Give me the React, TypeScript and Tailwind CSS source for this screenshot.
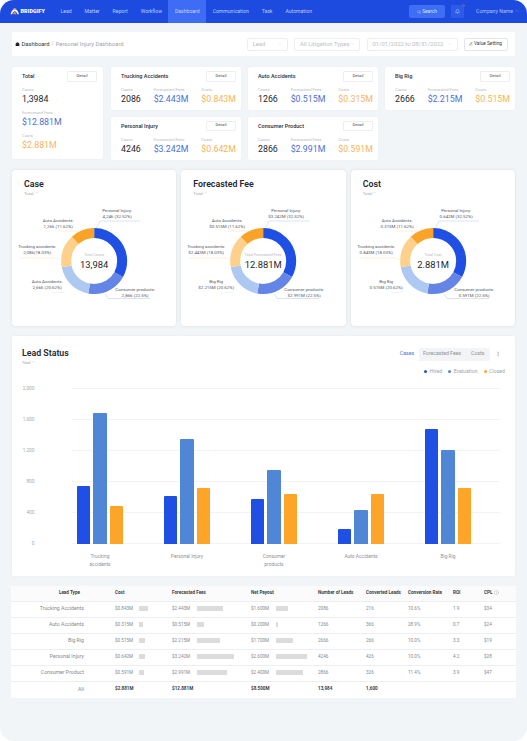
import { Bell, ChevronDown, House, Info, MoreVertical, PencilLine, Search } from "lucide-react";

const NAV = ["Lead", "Matter", "Report", "Workflow", "Dashboard", "Communication", "Task", "Automation"];

const CARDS = [
  { title: "Trucking Accidents", cases: "2086", fees: "$2.443M", costs: "$0.843M" },
  { title: "Auto Accidents", cases: "1266", fees: "$0.515M", costs: "$0.315M" },
  { title: "Big Rig", cases: "2666", fees: "$2.215M", costs: "$0.515M" },
  { title: "Personal Injury", cases: "4246", fees: "$3.242M", costs: "$0.642M" },
  { title: "Consumer Product", cases: "2866", fees: "$2.991M", costs: "$0.591M" },
];

const SEGMENTS = [
  { share: 33, color: "#1f4fe3" },
  { share: 19.8, color: "#6585e6" },
  { share: 19, color: "#adc8f1" },
  { share: 16.2, color: "#fdd08c" },
  { share: 12, color: "#f9a428" },
];

const DONUTS = [
  {
    title: "Case",
    centerLabel: "Total Cases",
    center: "13,984",
    labels: [
      ["Personal Injury:", "4,246 (32.52%)"],
      ["Auto Accidents:", "1,266 (11.62%)"],
      ["Trucking accidents:", "2,086(18.03%)"],
      ["Auto Accidents:", "2,666 (20.62%)"],
      ["Consumer products:", "2,866 (22.5%)"],
    ],
  },
  {
    title: "Forecasted Fee",
    centerLabel: "Total Forecasted Fees",
    center: "12.881M",
    labels: [
      ["Personal Injury:", "$3.242M (32.52%)"],
      ["Auto Accidents:", "$0.515M (11.62%)"],
      ["Trucking accidents:", "$2.443M (18.03%)"],
      ["Big Rig", "$2.215M (20.62%)"],
      ["Consumer products:", "$2.991M (22.5%)"],
    ],
  },
  {
    title: "Cost",
    centerLabel: "Total Cost",
    center: "2.881M",
    labels: [
      ["Personal Injury:", "0.642M (32.52%)"],
      ["Auto Accidents:", "0.315M (11.62%)"],
      ["Trucking accidents:", "0.843M (18.03%)"],
      ["Big Rig", "0.515M (20.62%)"],
      ["Consumer products:", "0.591M (22.5%)"],
    ],
  },
];

const BARS = [
  { name: ["Trucking", "accidents"], hired: 58, evaluation: 131, closed: 38 },
  { name: ["Personal Injury"], hired: 48, evaluation: 105, closed: 56 },
  { name: ["Consumer", "products"], hired: 45, evaluation: 74, closed: 50 },
  { name: ["Auto Accidents"], hired: 15, evaluation: 34, closed: 50 },
  { name: ["Big Rig"], hired: 115, evaluation: 94, closed: 56 },
];

const ROWS = [
  { type: "Trucking Accidents", cost: "$0.843M", costBar: 8.5, fee: "$2.443M", feeBar: 25.7, net: "$1.600M", netBar: 12, leads: "2086", conv: "216", rate: "10.6%", roi: "1.9", cpl: "$34" },
  { type: "Auto Accidents", cost: "$0.315M", costBar: 4.3, fee: "$0.515M", feeBar: 7, net: "$0.200M", netBar: 2, leads: "1266", conv: "366", rate: "28.9%", roi: "0.7", cpl: "$24" },
  { type: "Big Rig", cost: "$0.515M", costBar: 6.3, fee: "$2.215M", feeBar: 23, net: "$1.700M", netBar: 17, leads: "2666", conv: "266", rate: "10.0%", roi: "3.3", cpl: "$19" },
  { type: "Personal Injury", cost: "$0.642M", costBar: 5.5, fee: "$3.242M", feeBar: 37, net: "$2.600M", netBar: 30.5, leads: "4246", conv: "426", rate: "10.0%", roi: "4.2", cpl: "$28" },
  { type: "Consumer Product", cost: "$0.591M", costBar: 5.3, fee: "$2.991M", feeBar: 30, net: "$2.400M", netBar: 27, leads: "2866", conv: "326", rate: "11.4%", roi: "3.9", cpl: "$47" },
];

const COLS = "grid grid-cols-[104px_57px_79px_67px_48px_42px_45px_31px_1fr] items-center";

function DetailButton() {
  return (
    <button className="flex h-[10.5px] w-[30px] items-center justify-center rounded-[1px] border border-[#eceef1] bg-white text-[4.4px] text-[#555]">
      Detail
    </button>
  );
}

function Stat({ label, value, color }: { label: string; value: string; color: string }) {
  return (
    <div>
      <div className="text-[4.2px] leading-[5px] text-[#b9bdc2]">{label}</div>
      <div className={`mt-[2px] text-[8.8px] leading-[11px] ${color}`}>{value}</div>
    </div>
  );
}

function StatCard({ card }: { card: (typeof CARDS)[number] }) {
  return (
    <div className="rounded-[2px] bg-white pl-[10px] pr-[5px] pt-[4px] shadow-[0_0_2px_rgba(30,40,60,0.06)]">
      <div className="flex items-center justify-between">
        <span className="text-[5.5px] font-medium text-[#2b2f36]">{card.title}</span>
        <DetailButton />
      </div>
      <div className="mt-[5.5px] flex justify-between">
        <Stat label="Cases" value={card.cases} color="text-[#23262b]" />
        <Stat label="Forecasted Fees" value={card.fees} color="text-[#4a70d9]" />
        <Stat label="Costs" value={card.costs} color="text-[#f8b55a]" />
      </div>
    </div>
  );
}

function arcs() {
  const circumference = 2 * Math.PI * 28;
  let offset = 0;
  return SEGMENTS.map((s) => {
    const len = (s.share / 100) * circumference;
    const el = (
      <circle
        key={s.color}
        cx="82"
        cy="91"
        r="28"
        fill="none"
        stroke={s.color}
        strokeWidth="10"
        strokeDasharray={`${len} ${circumference - len}`}
        strokeDashoffset={-offset}
        transform="rotate(-90 82 91)"
      />
    );
    offset += len;
    return el;
  });
}

function Donut({ data }: { data: (typeof DONUTS)[number] }) {
  const spots: [number, number, number][] = [
    [105, 40.5, 46.5],
    [46, 50.5, 56.5],
    [25, 76.5, 82.5],
    [35, 111.5, 117.5],
    [123, 119, 125],
  ];
  return (
    <div className="h-[156px] rounded-[4px] bg-white shadow-[0_0_3px_rgba(30,40,60,0.12)]">
      <div className="px-[12px] pt-[8px]">
        <h2 className="text-[8.8px] leading-[12px] font-semibold text-[#23262f]">{data.title}</h2>
        <div className="mt-[1px] flex items-center gap-[1px] text-[4.3px] leading-[5px] text-[#a7abb0]">
          Total <ChevronDown className="h-[3.5px] w-[3.5px]" />
        </div>
      </div>
      {/* svg starts at card top, pulled up under the header */}
      <svg viewBox="0 0 164 156" className="mt-[-26px] block h-[156px] w-full font-['Roboto',sans-serif]">
        {arcs()}
        <polyline points="84,58 88,51 128,51" fill="none" stroke="#b6c4ef" strokeWidth="0.5" />
        <polyline points="67,61 46,61" fill="none" stroke="#fbd9a6" strokeWidth="0.5" />
        <polyline points="50,90 44,88 8,88" fill="none" stroke="#fde3bf" strokeWidth="0.5" />
        <polyline points="52,122 40,123" fill="none" stroke="#dbe6f7" strokeWidth="0.5" />
        <polyline points="93,124 96,128.5 138,128.5" fill="none" stroke="#b6c4ef" strokeWidth="0.5" />
        {data.labels.map((pair, i) => (
          <text key={i} textAnchor="middle" className="fill-[#55595f] text-[4.4px]">
            <tspan x={spots[i][0]} y={spots[i][1] + 1.5}>{pair[0]}</tspan>
            <tspan x={spots[i][0]} y={spots[i][2] + 1.5}>{pair[1]}</tspan>
          </text>
        ))}
        <text x="82" y="85.5" textAnchor="middle" className="fill-[#b9bcc1] text-[3.8px]">{data.centerLabel}</text>
        <text x="82" y="97.5" textAnchor="middle" className="fill-[#23262b] text-[9.4px]">{data.center}</text>
      </svg>
    </div>
  );
}

function Meter({ width }: { width: number }) {
  return <span className="h-[5px] bg-[#dcdcdc]" style={{ width }} />;
}

export default function App() {
  return (
    <div className="h-[741px] w-[527px] overflow-hidden rounded-[14px] bg-[#f2f5f8] font-['Roboto',sans-serif]">
      {/* top bar */}
      <header className="flex h-[23px] items-center bg-[#1d4be0] pl-[10px] pr-[8px] text-white">
        <div className="flex w-[44px] items-center gap-[1px]">
          <svg viewBox="0 0 10 8" className="h-[7px] w-[9.5px]">
            <path d="M0.3 7 Q1 2.4 5 1 Q9 2.4 9.7 7 L8 7 Q7.6 4.6 5 3.4 Q2.4 4.6 2 7 Z" fill="#fff" />
            <path d="M3 7 Q3.3 5 5 4.2 Q6.7 5 7 7 Z" fill="#f08a4b" />
            <path d="M2.6 1.4 L5 0 L7.4 1.4 L5 2.4 Z" fill="#f3a27a" />
          </svg>
          <span className="text-[5.4px] font-black tracking-[0.1px]">BRIDGIFY</span>
        </div>
        <nav className="flex h-full items-stretch text-[5.1px] text-[#bccdfb]">
          {NAV.map((item) => (
            <span
              key={item}
              className={`flex items-center px-[6.5px] ${item === "Dashboard" ? "bg-[#3f6cf4] text-[#c7d5fc]" : ""}`}
            >
              {item}
            </span>
          ))}
        </nav>
        <div className="ml-auto flex items-center">
          <button className="flex h-[13px] w-[36px] items-center justify-center gap-[1px] rounded-[2px] bg-[#3f6ef5] text-[4.8px] text-[#dbe5fe]">
            <Search className="h-[4px] w-[4px]" /> Search
          </button>
          <span className="relative ml-[6px] flex h-[13px] w-[13px] items-center justify-center rounded-[1px] bg-[#2c5bea]">
            <Bell className="h-[5px] w-[5px] text-[#dbe5fe]" />
            <span className="absolute right-[-1px] top-[-1.5px] h-[3px] w-[3px] rounded-full bg-[#6a55c8]" />
          </span>
          <span className="ml-[12px] flex w-[43px] items-center justify-between text-[5.2px] text-[#a9c0fa]">
            Company Name <ChevronDown className="h-[4px] w-[4px]" />
          </span>
        </div>
      </header>

      <main className="pl-[12px] pr-[12px]">
        {/* filters */}
        <section className="mt-[9px] flex h-[24px] items-center rounded-[1px] bg-white pl-[3px] pr-[7.5px]">
          <House className="h-[4.5px] w-[5px] fill-[#222] text-[#222]" />
          <span className="ml-[1.5px] text-[5.8px] text-[#33373d]">Dashboard</span>
          <span className="mx-[2px] text-[5.2px] text-[#a5a9ae]">/</span>
          <span className="text-[5.8px] text-[#a0a4a9]">Personal Injury Dashboard</span>
          <div className="ml-auto flex items-center gap-[6.5px] text-[5.9px] text-[#bcc0c5]">
            <span className="flex h-[13px] w-[41px] items-center justify-between rounded-[2px] border border-[#eceef1] px-[5px]">
              Lead <ChevronDown className="h-[3.5px] w-[3.5px]" />
            </span>
            <span className="flex h-[13px] w-[66px] items-center justify-between rounded-[2px] border border-[#eceef1] px-[5px]">
              All Litigation Types <ChevronDown className="h-[3.5px] w-[3.5px]" />
            </span>
            <span className="flex h-[13px] w-[91px] items-center justify-between rounded-[2px] border border-[#eceef1] px-[5px]">
              01/01/2022 to 08/31/2022 <ChevronDown className="h-[3.5px] w-[3.5px]" />
            </span>
            <span className="flex h-[13px] w-[43.5px] items-center justify-center gap-[1px] rounded-[2px] border border-[#e4e6ea] text-[4.8px] text-[#3a3d42]">
              <PencilLine className="h-[3.5px] w-[3.5px]" /> Value Setting
            </span>
          </div>
        </section>

        {/* stat cards */}
        <section className="mt-[11px] flex gap-[8px]">
          <div className="h-[92px] w-[91px] rounded-[2px] bg-white pl-[10px] pr-[6px] pt-[4px] shadow-[0_0_2px_rgba(30,40,60,0.06)]">
            <div className="flex items-center justify-between">
              <span className="text-[5.5px] font-medium text-[#2b2f36]">Total</span>
              <DetailButton />
            </div>
            <div className="mt-[5px] flex flex-col gap-[5px]">
              <Stat label="Cases" value="1,3984" color="text-[#23262b]" />
              <Stat label="Forecasted Fees" value="$12.881M" color="text-[#4a70d9]" />
              <Stat label="Costs" value="$2.881M" color="text-[#f8b55a]" />
            </div>
          </div>
          <div className="grid flex-1 grid-cols-3 grid-rows-[42.5px_43px] gap-x-[7px] gap-y-[7px]">
            {CARDS.map((card) => (
              <StatCard key={card.title} card={card} />
            ))}
          </div>
        </section>

        {/* donuts */}
        <section className="mt-[10px] grid grid-cols-3 gap-[5px]">
          {DONUTS.map((d) => (
            <Donut key={d.title} data={d} />
          ))}
        </section>

        {/* lead status */}
        <section className="mt-[10px] h-[240px] rounded-[2px] bg-white shadow-[0_0_2px_rgba(30,40,60,0.08)]">
          <div className="flex items-start justify-between pl-[10px] pr-[14px] pt-[12px]">
            <div>
              <h2 className="text-[8.8px] leading-[11px] font-semibold text-[#23262f]">Lead Status</h2>
              <div className="mt-[1px] flex items-center gap-[1px] text-[3.8px] leading-[5px] text-[#9ea2a7]">
                Total <ChevronDown className="h-[3.5px] w-[3.5px]" />
              </div>
            </div>
            <div className="flex flex-col items-end">
              <div className="flex items-center">
                <div className="flex h-[13px] w-[95px] items-center rounded-[2px] bg-[#f3f4f6] text-[5.2px] text-[#8d9197]">
                  <span className="flex h-full w-[24px] items-center justify-center rounded-[2px] bg-white text-[#4a70d9]">Cases</span>
                  <span className="ml-[4px]">Forecasted Fees</span>
                  <span className="ml-[10px]">Costs</span>
                </div>
                <MoreVertical className="ml-[5px] h-[6px] w-[6px] text-[#9ea2a7]" />
              </div>
              <div className="mr-[-4px] mt-[7.5px] flex items-center text-[5.2px] leading-[6px] text-[#a0a4a9]">
                <i className="h-[3px] w-[3px] rounded-full bg-[#1f4fe3]" />
                <span className="ml-[2.5px]">Hired</span>
                <i className="ml-[6px] h-[3px] w-[3px] rounded-full bg-[#4f86d6]" />
                <span className="ml-[2.5px]">Evaluation</span>
                <i className="ml-[6px] h-[3px] w-[3px] rounded-full bg-[#fca528]" />
                <span className="ml-[2.5px]">Closed</span>
              </div>
            </div>
          </div>

          <div className="relative mt-[14.5px] h-[155px]">
            {/* grid lines and axis */}
            <div className="flex h-[155px] flex-col justify-between pl-[10px] pr-[15px]">
              {["2,000", "1,600", "1,200", "800", "400", "0"].map((tick) => (
                <div key={tick} className="flex h-0 items-center">
                  <span className="w-[12.5px] text-right text-[4.8px] text-[#a7abb0]">{tick}</span>
                  <span className="ml-[37.5px] h-px flex-1 bg-[#f1f3f5]" />
                </div>
              ))}
            </div>
            {/* bars over the grid lines */}
            <div className="absolute bottom-0 left-[44.5px] flex items-end">
              {BARS.map((b) => (
                <div key={b.name[0]} className="flex w-[87px] items-end justify-center gap-[3px]">
                  <span className="w-[13.4px] rounded-t-[1px] bg-[#1f4fe3]" style={{ height: b.hired }} />
                  <span className="w-[13.4px] rounded-t-[1px] bg-[#4f86d6]" style={{ height: b.evaluation }} />
                  <span className="w-[13.4px] rounded-t-[1px] bg-[#fca528]" style={{ height: b.closed }} />
                </div>
              ))}
            </div>
          </div>
          <div className="ml-[44.5px] mt-[9.5px] flex">
            {BARS.map((b) => (
              <div key={b.name[0]} className="w-[87px] text-center text-[4.9px] leading-[7.5px] text-[#8e9298]">
                {b.name.map((line) => (
                  <div key={line}>{line}</div>
                ))}
              </div>
            ))}
          </div>
        </section>

        {/* table */}
        <section className="mx-[-1px] mt-[10px] rounded-[1px] bg-white text-[4.6px] text-[#85898f]">
          <div className={`${COLS} h-[16px] border-b border-[#eceef1] bg-[#fbfbfc] font-bold text-[#3a3d42]`}>
            <span className="pr-[35px] text-right">Lead Type</span>
            <span>Cost</span>
            <span>Forecasted Fees</span>
            <span>Net Payout</span>
            <span>Number of Leads</span>
            <span>Converted Leads</span>
            <span>Conversion Rate</span>
            <span>ROI</span>
            <span className="flex items-center gap-[2px]">
              CPL <Info className="h-[5px] w-[5px] text-[#b4b8bd]" />
            </span>
          </div>
          {ROWS.map((r) => (
            <div key={r.type} className={`${COLS} h-[16px] border-b border-[#eceef1]`}>
              <span className="pr-[31px] text-right text-[5.2px]">{r.type}</span>
              <span className="flex items-center">
                <span className="w-[24px]">{r.cost}</span>
                <Meter width={r.costBar} />
              </span>
              <span className="flex items-center">
                <span className="w-[25px]">{r.fee}</span>
                <Meter width={r.feeBar} />
              </span>
              <span className="flex items-center">
                <span className="w-[25px]">{r.net}</span>
                <Meter width={r.netBar} />
              </span>
              <span>{r.leads}</span>
              <span>{r.conv}</span>
              <span>{r.rate}</span>
              <span>{r.roi}</span>
              <span>{r.cpl}</span>
            </div>
          ))}
          <div className={`${COLS} h-[16px] font-bold text-[#3a3d42]`}>
            <span className="pr-[31px] text-right text-[5.2px] font-normal text-[#85898f]">All</span>
            <span>$2.881M</span>
            <span>$12.881M</span>
            <span>$8.500M</span>
            <span>13,984</span>
            <span>1,600</span>
          </div>
        </section>
      </main>
    </div>
  );
}
